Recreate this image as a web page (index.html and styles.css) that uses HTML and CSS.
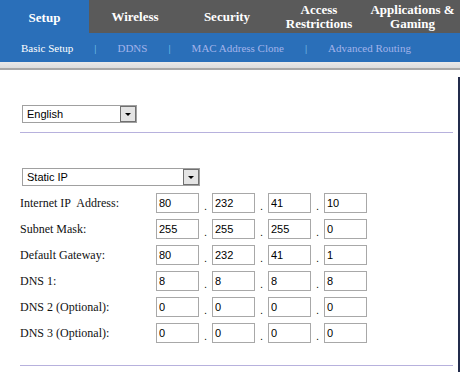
FILE: index.html
```html
<!DOCTYPE html>
<html lang="en">
<head>
    <meta charset="UTF-8">
    <title>Setup - Basic Setup</title>
    <link rel="stylesheet" href="styles.css">
</head>
<body>
    <header class="tabs">
        <div class="tab active">Setup</div>
        <div class="tab">Wireless</div>
        <div class="tab">Security</div>
        <div class="tab">Access<br>Restrictions</div>
        <div class="tab last">Applications &amp;<br>Gaming</div>
    </header>
    <nav class="subnav">
        <span class="current">Basic Setup</span>
        <span class="sep">|</span>
        <span>DDNS</span>
        <span class="sep">|</span>
        <span>MAC Address Clone</span>
        <span class="sep">|</span>
        <span>Advanced Routing</span>
    </nav>
    <div class="band"></div>
    <main class="content">
        <div class="select lang">
            <span class="value">English</span>
            <span class="arrow"></span>
        </div>
        <hr class="rule">
        <div class="select conn">
            <span class="value">Static IP</span>
            <span class="arrow"></span>
        </div>
        <div class="rows">
            <div class="row">
                <label>Internet IP&nbsp; Address:</label>
                <div class="ip"><input value="80"><i>.</i><input value="232"><i>.</i><input value="41"><i>.</i><input value="10"></div>
            </div>
            <div class="row">
                <label>Subnet Mask:</label>
                <div class="ip"><input value="255"><i>.</i><input value="255"><i>.</i><input value="255"><i>.</i><input value="0"></div>
            </div>
            <div class="row">
                <label>Default Gateway:</label>
                <div class="ip"><input value="80"><i>.</i><input value="232"><i>.</i><input value="41"><i>.</i><input value="1"></div>
            </div>
            <div class="row">
                <label>DNS 1:</label>
                <div class="ip"><input value="8"><i>.</i><input value="8"><i>.</i><input value="8"><i>.</i><input value="8"></div>
            </div>
            <div class="row">
                <label>DNS 2 (Optional):</label>
                <div class="ip"><input value="0"><i>.</i><input value="0"><i>.</i><input value="0"><i>.</i><input value="0"></div>
            </div>
            <div class="row">
                <label>DNS 3 (Optional):</label>
                <div class="ip"><input value="0"><i>.</i><input value="0"><i>.</i><input value="0"><i>.</i><input value="0"></div>
            </div>
        </div>
        <hr class="rule bottom">
    </main>
</body>
</html>
```

FILE: styles.css
```css
* {
    box-sizing: border-box;
}

body {
    margin: 0;
    background: #fff;
    font-family: "Liberation Serif", "Times New Roman", serif;
    color: #111;
    overflow: hidden;
}

/* Top tabs */
.tabs {
    display: flex;
    height: 33px;
    background: #5a5a5a;
}

.tab {
    width: 92px;
    display: flex;
    align-items: center;
    justify-content: center;
    text-align: center;
    color: #fff;
    font-weight: bold;
    font-size: 13px;
    line-height: 14px;
}

.tab.active {
    width: 89px;
    background: #2a6fb9;
    padding-top: 3px;
}

.tab.last {
    flex: 1;
}

/* Sub navigation */
.subnav {
    display: flex;
    align-items: center;
    height: 29px;
    padding-left: 21px;
    background: #2a6fb9;
    font-size: 11px;
    color: #a3b3ea;
}

.subnav .current {
    color: #fff;
}

.subnav .sep {
    padding: 0 21px;
    color: #7cc6ee;
}

.band {
    height: 8px;
    background: linear-gradient(#e9e9e9, #dcdcdc);
    border-bottom: 2px solid #a8a8a8;
}

/* Content */
.content {
    margin-top: 7px;
    padding: 28px 5px 0 20px;
    height: 300px;
    border-right: 2px solid #232c4c;
}

.select {
    display: flex;
    align-items: center;
    justify-content: space-between;
    height: 18px;
    margin-left: 2px;
    border: 1px solid #a0a0a0;
    font-family: "Liberation Sans", Arial, sans-serif;
    font-size: 11px;
    color: #000;
}

.select .value {
    padding-left: 4px;
}

.select .arrow {
    position: relative;
    width: 16px;
    height: 16px;
    background: #e4e4e4;
    border: 1px solid #707070;
}

.select .arrow::after {
    content: "";
    position: absolute;
    left: 4px;
    top: 6px;
    border-left: 3px solid transparent;
    border-right: 3px solid transparent;
    border-top: 3px solid #000;
}

.lang {
    width: 115px;
}

.conn {
    width: 178px;
    margin-top: 35px;
}

.rule {
    margin: 9px 0 0;
    border: 0;
    height: 1px;
    background: #b7b1dd;
}

.rule.bottom {
    margin-top: 22px;
}

.rows {
    display: flex;
    flex-direction: column;
    gap: 6px;
    margin-top: 7px;
}

.row {
    display: flex;
    align-items: center;
    height: 20px;
}

.row label {
    width: 136px;
    font-size: 12px;
    color: #111;
}

.ip {
    display: flex;
    align-items: flex-end;
}

.ip input {
    width: 43px;
    height: 20px;
    margin: 0;
    padding: 0 0 0 2px;
    border: 1px solid #a8a8a8;
    font-family: "Liberation Sans", Arial, sans-serif;
    font-size: 11px;
    color: #000;
    outline: none;
}

.ip i {
    width: 13px;
    font-style: normal;
    font-family: "Liberation Sans", Arial, sans-serif;
    font-size: 11px;
    line-height: 14px;
    text-align: center;
}
```
